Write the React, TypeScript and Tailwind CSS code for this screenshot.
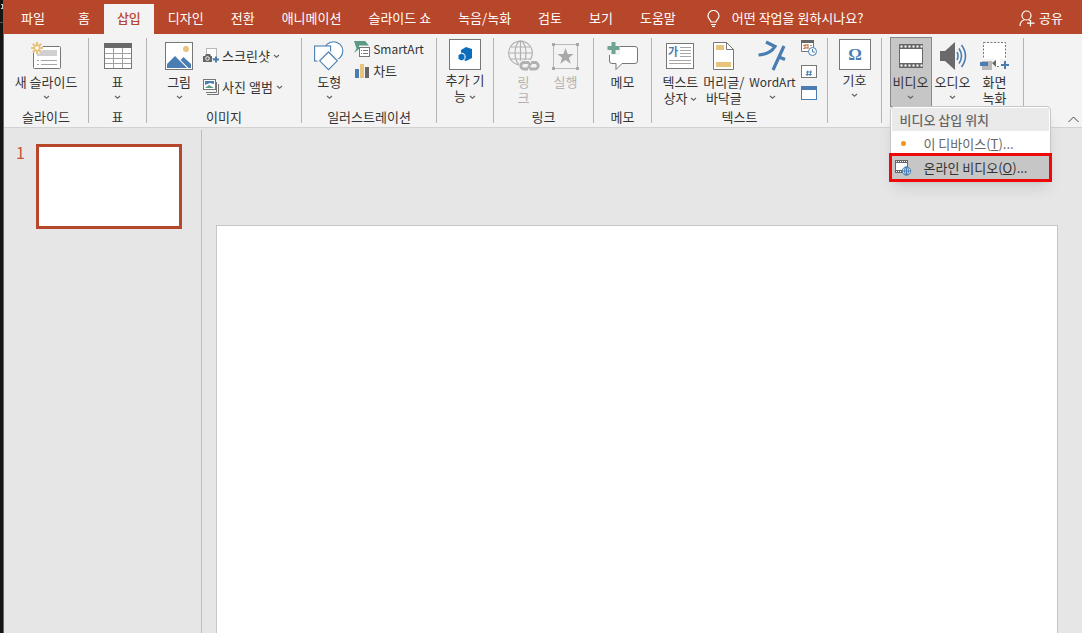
import type { ReactNode } from "react";

const TABS = ["홈", "삽입", "디자인", "전환", "애니메이션", "슬라이드 쇼", "녹음/녹화", "검토", "보기", "도움말"];

function Caret() {
  return (
    <svg width="7" height="5" viewBox="0 0 7 5" className="inline-block shrink-0" fill="none" stroke="#666" strokeWidth="1.2">
      <path d="M1 1l2.5 2.3L6 1" />
    </svg>
  );
}

function Group({ label, className, children }: { label?: string; className: string; children: ReactNode }) {
  return (
    <section className={`flex shrink-0 flex-col border-r border-[#b4b4b4] ${className}`}>
      <div className="flex h-[74px] justify-center">{children}</div>
      {label && <div className="text-center leading-3">{label}</div>}
    </section>
  );
}

type BigProps = {
  icon: ReactNode;
  label: string;
  caret?: "below" | "inline";
  boxed?: boolean;
  small?: boolean;
  disabled?: boolean;
  className?: string;
};

function BigButton({ icon, label, caret, boxed, small, disabled, className = "" }: BigProps) {
  return (
    <button
      type="button"
      disabled={disabled}
      className={`flex shrink-0 flex-col items-center disabled:text-[#b1b1b1] ${className}`}
    >
      <span className={`flex shrink-0 items-center justify-center ${boxed ? "h-[34px] pb-[2px]" : "h-9"}`}>{icon}</span>
      <span className={`whitespace-pre text-center leading-4 ${small ? "text-xs leading-4" : ""}`}>
        {label}
        {caret === "inline" && <> <Caret /></>}
      </span>
      {caret === "below" && (
        <span className="flex h-[14px] items-center">
          <Caret />
        </span>
      )}
    </button>
  );
}

function SmallButton({ icon, label, caret, className = "" }: { icon: ReactNode; label: string; caret?: boolean; className?: string }) {
  return (
    <button type="button" className={`flex items-center gap-[3px] whitespace-nowrap leading-4 ${className}`}>
      {icon}
      <span>{label}</span>
      {caret && <Caret />}
    </button>
  );
}

/* Icons */

function NewSlideIcon() {
  return (
    <svg width="32" height="30" viewBox="0 0 32 30" fill="none">
      <rect x="3.5" y="5.5" width="27" height="22" rx="1" fill="#fff" stroke="#777" />
      <rect x="7" y="9" width="20" height="6" fill="#d0d0d0" />
      <path d="M7 19.5h2M11 19.5h16M7 23.5h2M11 23.5h16" stroke="#a6a6a6" />
      <circle cx="7" cy="7" r="6" fill="#f3f3f3" />
      <path d="M7 1v3M7 10v3M1 7h3M10 7h3M2.8 2.8l2 2M9.2 9.2l2 2M11.2 2.8l-2 2M4.8 9.2l-2 2" stroke="#e9c27c" strokeWidth="2" />
      <circle cx="7" cy="7" r="2.6" fill="#fff" stroke="#e9c27c" strokeWidth="1.6" />
    </svg>
  );
}

function TableIcon() {
  return (
    <svg width="28" height="26" viewBox="0 0 28 26" fill="none">
      <rect x=".5" y=".5" width="27" height="25" fill="#fff" stroke="#777" />
      <rect width="28" height="5" fill="#6a6a6a" />
      <path d="M1 10.5h26M1 15.5h26M1 20.5h26M9.5 5v20M18.5 5v20" stroke="#a0a0a0" />
    </svg>
  );
}

function PictureIcon() {
  return (
    <svg width="28" height="28" viewBox="0 0 28 28" fill="none">
      <rect x=".5" y=".5" width="27" height="27" fill="#fff" stroke="#777" />
      <circle cx="21" cy="7" r="3" fill="#e9c27c" />
      <path d="M2 26v-4l8-8 12 12z" fill="#4a7eb2" />
      <path d="M15.5 18l3-3L26 22v4h-2.5z" fill="#4a7eb2" />
    </svg>
  );
}

function ScreenshotIcon() {
  return (
    <svg width="16" height="16" viewBox="0 0 16 16" fill="none">
      <rect x="3.5" y=".5" width="10" height="10" fill="#fff" stroke="#777" strokeDasharray="1 1" />
      <path d="M0 8h2l1-2h4l1 2h1v6H0z" fill="#666" />
      <circle cx="4.5" cy="10.5" r="1.8" stroke="#fff" />
      <path d="M13 8.5v6M10 11.500h6" stroke="#4a7eb2" strokeWidth="2" />
    </svg>
  );
}

function AlbumIcon() {
  return (
    <svg width="16" height="16" viewBox="0 0 16 16" fill="none">
      <path d="M15.5 5v10.500H4M13.500 3v10.500H3" stroke="#777" />
      <rect x=".5" y=".5" width="12" height="10" fill="#fff" stroke="#777" />
      <path d="M2 2h9v3L7 4 2 6z" fill="#4a7eb2" />
      <path d="M2 9l4-3 5 3z" fill="#5c9a83" />
    </svg>
  );
}

function ShapesIcon() {
  return (
    <svg width="30" height="30" viewBox="0 0 30 30" fill="#fff" stroke="#4a7eb2" strokeWidth="1.1">
      <circle cx="19.5" cy="10" r="9.3" />
      <rect x=".6" y="5" width="16" height="15" />
      <path d="M14.5 10.5l9.5 9.3-9.5 9.3L5 19.8z" stroke="#f3f3f3" strokeWidth="3" />
      <path d="M14.5 11l8.800 8.800-8.800 8.800-8.800-8.800z" />
    </svg>
  );
}

function SmartArtIcon() {
  return (
    <svg width="16" height="16" viewBox="0 0 16 16" fill="none">
      <path d="M0 0h11l4 4.500H5V8L0 12l2.500-4.500L0 0z" fill="#5c9a83" />
      <rect x="5" y="6" width="11" height="10" fill="#f3f3f3" />
      <rect x="5.5" y="6.5" width="10" height="9" fill="#fff" stroke="#777" />
      <path d="M7 9.500h1M9 9.500h5M7 12.500h1M9 12.500h5" stroke="#777" />
    </svg>
  );
}

function ChartIcon() {
  return (
    <svg width="16" height="14" viewBox="0 0 16 14">
      <path d="M1 5h4v9H1z" fill="#4a7eb2" />
      <path d="M6 0h4v14H6z" fill="#e9c27c" />
      <path d="M11 3h4v11h-4z" fill="#666" />
    </svg>
  );
}

function AddInIcon() {
  return (
    <svg width="32" height="31" viewBox="0 0 32 31">
      <rect x=".5" y=".5" width="31" height="30" fill="#fff" stroke="#777" />
      <path d="M17 8l6 2v9l-6 3-5-2v-9z" fill="#0a6ebd" />
      <circle cx="12.500" cy="18" r="4.200" fill="#fff" />
      <path d="M12.500 14.500l3 1.500v4l-3 1.500-3-1.500v-4z" fill="#0a6ebd" />
    </svg>
  );
}

function LinkIcon() {
  return (
    <svg width="32" height="32" viewBox="0 0 32 32" fill="none" stroke="#b1b1b1" strokeWidth="1.2">
      <circle cx="12.500" cy="13" r="11.800" />
      <ellipse cx="12.500" cy="13" rx="5.500" ry="11.800" />
      <path d="M12.500 1v24M1 13h23M3 7h19M3 19h19" />
      <path d="M13 20h19v12H11v-9z" fill="#f3f3f3" stroke="none" />
      <path d="M20 29h-4a3.200 3.200 0 0 1 0-6.500h4l3 3M23 22.500h4a3.200 3.200 0 0 1 0 6.500h-4l-3-3" strokeWidth="2.800" />
    </svg>
  );
}

function ActionIcon() {
  return (
    <svg width="28" height="27" viewBox="0 0 28 27" fill="none">
      <path d="M1.500 1.500h24v24h-24z" stroke="#b9b9b9" />
      <path d="M0 0h3v3H0zM24 0h3v3h-3zM0 24h3v3H0zM24 24h3v3h-3z" fill="#a9a9a9" />
      <path d="M13.500 5l2.200 6h6l-4.800 3.700 1.800 6-5.200-3.600-5.200 3.600 1.800-6L5.300 11h6z" fill="#a9a9a9" />
    </svg>
  );
}

function CommentIcon() {
  return (
    <svg width="32" height="30" viewBox="0 0 32 30" fill="none">
      <path d="M5 5.500h23q2.500 0 2.500 2.500v12q0 2.500-2.500 2.500H15L9 28.500v-6H5q-2.500 0-2.500-2.500V8q0-2.500 2.500-2.500z" fill="#fff" stroke="#777" />
      <path d="M0 0h13v14H0z" fill="#f3f3f3" />
      <path d="M6.500 1v12M.5 7h12" stroke="#6fa592" strokeWidth="4" />
    </svg>
  );
}

function TextBoxIcon() {
  return (
    <svg width="28" height="26" viewBox="0 0 28 26" fill="none">
      <rect x=".5" y=".5" width="27" height="25" fill="#fff" stroke="#777" />
      <path d="M14 4.500h11M14 7.500h11M14 10.500h11M14 13.500h11M3 17.500h22M3 20.500h22" stroke="#a6a6a6" />
      <text x="2" y="13" fontSize="11" fontWeight="700" fill="#4a7eb2">가</text>
    </svg>
  );
}

function HeaderFooterIcon() {
  return (
    <svg width="21" height="28" viewBox="0 0 21 28" fill="none">
      <path d="M.5.5h13l7 7v20H.5z" fill="#fff" stroke="#777" />
      <path d="M13.500.5v7h7" stroke="#777" />
      <path d="M3 3h8v5H3zM3 20h15v5H3z" fill="#e9c27c" />
    </svg>
  );
}

function WordArtIcon() {
  return (
    <svg width="28" height="32" viewBox="0 0 28 32" fill="none" stroke="#4a7eb2" strokeWidth="3.2">
      <path d="M8 2l9 4.500c-3 5-9 8-16.500 8.500" />
      <path d="M26 6L15 30M21 17l6 2.500" />
    </svg>
  );
}

function DateIcon() {
  return (
    <svg width="16" height="16" viewBox="0 0 16 16" fill="none">
      <path d="M.5.5h12v11H.5z" fill="#fff" stroke="#777" />
      <path d="M0 0h13v3H0z" fill="#666" />
      <path d="M2 5.500h2M9 5.500h2M2 8.500h2" stroke="#999" />
      <rect x="4" y="5" width="3" height="3" stroke="#c9733b" strokeWidth="1.2" />
      <circle cx="11.500" cy="11.500" r="4" fill="#fff" stroke="#4a7eb2" />
      <path d="M11.500 9v3H14" stroke="#4a7eb2" />
    </svg>
  );
}

function SlideNumberIcon() {
  return (
    <svg width="16" height="13" viewBox="0 0 16 13" fill="none">
      <rect x=".5" y=".5" width="15" height="12" fill="#fff" stroke="#777" />
      <path d="M6.800 5.500L6 11M9.800 5.500L9 11M5 7h6M4.800 9.500h6" stroke="#4a7eb2" />
    </svg>
  );
}

function ObjectIcon() {
  return (
    <svg width="16" height="14" viewBox="0 0 16 14" fill="none">
      <rect x=".5" y=".5" width="15" height="13" fill="#fff" stroke="#4a7eb2" />
      <path d="M0 0h16v4H0z" fill="#4a7eb2" />
    </svg>
  );
}

function SymbolIcon() {
  return (
    <svg width="32" height="31" viewBox="0 0 32 31">
      <rect x=".5" y=".5" width="31" height="30" fill="#fff" stroke="#777" />
      <text x="16" y="21" textAnchor="middle" fontSize="17" fontWeight="700" fontFamily="Liberation Serif, serif" fill="#4a7eb2">Ω</text>
    </svg>
  );
}

function VideoIcon() {
  return (
    <svg width="24" height="24" viewBox="0 0 24 24" fill="none">
      <path d="M0 0h24v24H0z" fill="#666" />
      <path d="M1 5h22v14H1z" fill="#fff" />
      <path d="M1.500 2.500h22M1.500 21.500h22" stroke="#fff" strokeWidth="2" strokeDasharray="2 2" />
    </svg>
  );
}

function AudioIcon() {
  return (
    <svg width="28" height="28" viewBox="0 0 28 28" fill="none">
      <path d="M1 9h5l10-9v28l-10-9H1z" fill="#6a6a6a" />
      <path d="M18 10q2 4 0 8M20 6.500q5 7.500 0 15M22.500 3q8 11 0 22" stroke="#4a7eb2" strokeWidth="1.6" />
    </svg>
  );
}

function ScreenRecordIcon() {
  return (
    <svg width="30" height="30" viewBox="0 0 30 30" fill="none">
      <rect x="3.500" y="1.500" width="22" height="24" fill="#fff" stroke="#777" strokeDasharray="2 1.5" />
      <path d="M0 18h16v11H0z" fill="#f3f3f3" />
      <path d="M2 20h10v9H2z" fill="#b9b9b9" />
      <path d="M0 21h8v4H0z" fill="#4a7eb2" />
      <path d="M12 22l4-3v7z" fill="#666" />
      <path d="M20 18h10v11H20z" fill="#f3f3f3" />
      <path d="M25 20v8M21 24h8" stroke="#4a7eb2" strokeWidth="2" />
    </svg>
  );
}

function OnlineVideoIcon() {
  return (
    <svg width="17" height="17" viewBox="0 0 17 17" fill="none">
      <path d="M0 1h13v13H0z" fill="#666" />
      <path d="M1 4h11v7H1z" fill="#fff" />
      <path d="M1 2.500h12M1 12.500h12" stroke="#fff" strokeDasharray="1 1" />
      <circle cx="11.500" cy="12" r="4.200" fill="#dce8f3" stroke="#4a7eb2" />
      <path d="M7.500 12h8M11.500 8v8" stroke="#4a7eb2" />
      <ellipse cx="11.500" cy="12" rx="2" ry="4" stroke="#4a7eb2" />
    </svg>
  );
}

function VideoMenu() {
  return (
    <div
      role="menu"
      className="absolute left-0 top-[69px] z-10 w-[161px] rounded-sm border border-[#c6c6c6] bg-white p-px text-[#666] shadow-lg"
    >
      <div className="bg-[#eaeaea] pl-2 font-medium leading-[23px]">비디오 삽입 위치</div>
      <button type="button" role="menuitem" className="flex w-full items-center whitespace-nowrap leading-[25px]">
        <span className="ml-[9px] mr-[18px] size-[5px] rounded-full bg-[#f7941d]" />
        <span>
          이 디바이스(<u>T</u>)...
        </span>
      </button>
      <button
        type="button"
        role="menuitem"
        className="flex w-full items-center whitespace-nowrap bg-[#c6c6c6] leading-[23px] text-[#333] outline-3 outline-[#ee0a0a]"
      >
        <span className="ml-[3px] mr-3">
          <OnlineVideoIcon />
        </span>
        <span>
          온라인 비디오(<u>O</u>)...
        </span>
      </button>
    </div>
  );
}

function TabBar() {
  return (
    <header className="flex h-[34px] items-end bg-[#b7472a] pl-1 leading-7 text-white">
      <nav className="flex gap-px">
        <a href="#file" className="mr-[6px] px-[13px] pb-[2px]">파일</a>
        {TABS.map((tab) => (
          <a
            key={tab}
            href={`#${tab}`}
            className={`whitespace-nowrap px-[13px] pb-[2px] ${tab === "삽입" ? "bg-[#f3f3f3] font-medium text-[#b7472a]" : ""}`}
          >
            {tab}
          </a>
        ))}
      </nav>
      <button type="button" className="ml-[18px] flex items-center gap-3 whitespace-nowrap pb-[2px]">
        <svg width="13" height="17" viewBox="0 0 13 17" fill="none" stroke="#fff" strokeWidth="1.2">
          <path d="M4 12c0-2-3-3-3-6a5.500 5.500 0 0 1 11 0c0 3-3 4-3 6zM4 14.500h5M5 16.400h3" />
        </svg>
        어떤 작업을 원하시나요?
      </button>
      <button type="button" className="ml-auto mr-[19px] flex items-center gap-1 whitespace-nowrap pb-[2px]">
        <svg width="16" height="17" viewBox="0 0 16 17" fill="none" stroke="#fff" strokeWidth="1.2">
          <circle cx="7.500" cy="5.500" r="4.500" />
          <path d="M1 16c0-3 2-5.500 4.500-6.300M9.500 9.500l1.500 1M11.500 10v6.500M8 13.200h7.500" />
        </svg>
        공유
      </button>
    </header>
  );
}

function Ribbon() {
  return (
    <div className="flex h-[94px] border-b border-[#d2d2d2] bg-[#f3f3f3] py-1 text-[#333]">
      <Group label="슬라이드" className="w-[85px]">
        <BigButton icon={<NewSlideIcon />} label="새 슬라이드" caret="below" />
      </Group>
      <Group label="표" className="w-[58px]">
        <BigButton icon={<TableIcon />} label="표" caret="below" />
      </Group>
      <Group label="이미지" className="w-[155px]">
        <BigButton icon={<PictureIcon />} label="그림" caret="below" className="mr-[10px]" />
        <div className="flex flex-col gap-[15px] pt-[10px]">
          <SmallButton icon={<ScreenshotIcon />} label="스크린샷" caret />
          <SmallButton icon={<AlbumIcon />} label="사진 앨범 " caret className="gap-[3px]" />
        </div>
      </Group>
      <Group label="일러스트레이션" className="w-[135px]">
        <BigButton icon={<ShapesIcon />} label="도형" caret="below" className="mr-[10px]" />
        <div className="flex flex-col gap-[6px] pt-[3px]">
          <SmallButton icon={<SmartArtIcon />} label="SmartArt" className="text-xs leading-4" />
          <SmallButton icon={<ChartIcon />} label="차트" />
        </div>
      </Group>
      <Group className="w-[57px]">
        <BigButton icon={<AddInIcon />} label={"추가 기\n능"} caret="inline" boxed />
      </Group>
      <Group label="링크" className="w-[100px]">
        <BigButton icon={<LinkIcon />} label={"링\n크"} disabled className="mr-3" />
        <BigButton icon={<ActionIcon />} label="실행" disabled />
      </Group>
      <Group label="메모" className="w-[58px]">
        <BigButton icon={<CommentIcon />} label="메모" />
      </Group>
      <Group label="텍스트" className="w-[176px]">
        <BigButton icon={<TextBoxIcon />} label={"텍스트\n상자"} caret="inline" className="mr-[5px]" />
        <BigButton icon={<HeaderFooterIcon />} label={"머리글/\n바닥글"} className="mr-[5px]" />
        <BigButton icon={<WordArtIcon />} label="WordArt" caret="below" small className="mr-[5px]" />
        <div className="flex flex-col justify-between pb-[11px] pt-[2px]">
          <button type="button" aria-label="날짜 및 시간"><DateIcon /></button>
          <button type="button" aria-label="슬라이드 번호"><SlideNumberIcon /></button>
          <button type="button" aria-label="개체"><ObjectIcon /></button>
        </div>
      </Group>
      <Group className="w-[54px]">
        <BigButton icon={<SymbolIcon />} label="기호" caret="below" boxed />
      </Group>
      <Group className="w-[142px]">
        <div className="relative -mt-px flex">
          <BigButton
            icon={<VideoIcon />}
            label="비디오"
            caret="below"
            className="h-[70px] w-[42px] border border-[#888] bg-[#c6c6c6]"
          />
          <VideoMenu />
        </div>
        <BigButton icon={<AudioIcon />} label="오디오" caret="below" className="w-[42px]" />
        <BigButton icon={<ScreenRecordIcon />} label={"화면\n녹화"} className="w-[42px]" />
      </Group>
      <button type="button" aria-label="리본 메뉴 축소" className="ml-auto mr-[3px] self-end">
        <svg width="11" height="7" viewBox="0 0 11 7" fill="none" stroke="#444">
          <path d="M.5 6l5-5 5 5" />
        </svg>
      </button>
    </div>
  );
}

export default function App() {
  return (
    <div className="flex min-h-screen bg-[#e6e6e6] font-['Noto_Sans_CJK_KR',sans-serif] text-[13px]">
      <div className="w-1 shrink-0 border-r border-[#b7472a] bg-[#151515]">
        <svg width="3" height="24" viewBox="0 0 3 24" fill="none">
          <path d="M1 4.500h2M1 8.500h2M2.500 4v5" stroke="#ccc" />
          <path d="M0 22.500h3" stroke="#555" />
        </svg>
      </div>
      <div className="flex min-w-0 flex-1 flex-col">
        <TabBar />
        <Ribbon />
        <main className="flex flex-1 pt-[2px]">
          <aside className="flex w-[198px] shrink-0 items-start gap-[11px] border-r border-[#bdbdbd] pl-3 pt-[14px]">
            <span className="text-base leading-4 text-[#c4553a]">1</span>
            <button type="button" aria-label="슬라이드 1" className="h-[85px] w-[146px] border-3 border-[#b7472a] bg-white" />
          </aside>
          <section className="flex flex-1 pl-[14px] pr-6 pt-[95px]">
            <div className="flex-1 border border-b-0 border-[#c6c6c6] bg-white" />
          </section>
        </main>
      </div>
    </div>
  );
}
